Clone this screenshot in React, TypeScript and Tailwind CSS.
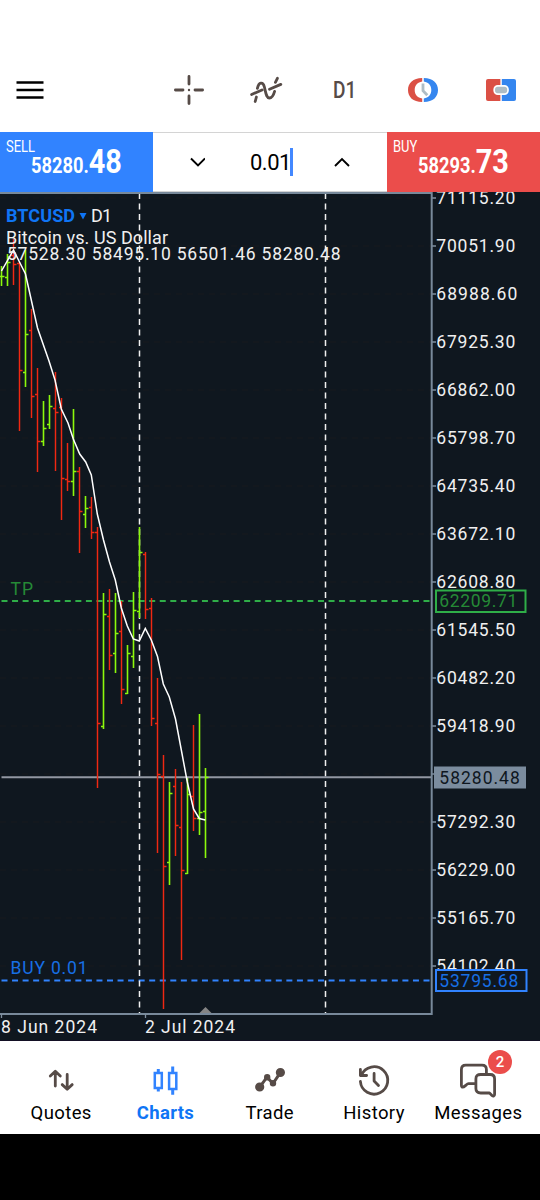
import React from "react";

type Bar = [high: number, low: number, open: number, close: number, up: 0 | 1];

// Daily bars, one every 6px from the left edge of the chart
const bars: Bar[] = [
  [266, 286, 276, 276, 1],
  [254, 286, 277, 262, 1],
  [239, 285, 255, 264, 0],
  [262, 431, 263, 370, 0],
  [250, 387, 372, 334, 1],
  [309, 418, 330, 396, 0],
  [368, 472, 394, 441, 0],
  [401, 446, 441, 428, 1],
  [395, 429, 424, 406, 1],
  [372, 471, 408, 412, 0],
  [398, 520, 407, 478, 0],
  [443, 491, 479, 481, 0],
  [409, 496, 481, 471, 1],
  [467, 553, 471, 511, 0],
  [496, 528, 514, 508, 1],
  [497, 539, 507, 532, 0],
  [527, 788, 532, 723, 0],
  [593, 729, 726, 614, 1],
  [589, 670, 616, 655, 0],
  [593, 673, 653, 633, 1],
  [601, 704, 631, 689, 0],
  [645, 694, 693, 653, 1],
  [592, 668, 656, 610, 1],
  [527, 618, 611, 552, 1],
  [552, 619, 554, 609, 0],
  [598, 726, 608, 718, 0],
  [678, 853, 723, 774, 0],
  [755, 1009, 776, 866, 0],
  [782, 885, 862, 793, 1],
  [769, 856, 786, 825, 0],
  [782, 960, 827, 870, 0],
  [778, 874, 873, 794, 1],
  [725, 831, 796, 818, 0],
  [714, 835, 818, 812, 1],
  [768, 858, 811, 777, 1],
];

const average =
  "1.5,271 13.5,250 19.5,262 25.5,274 31.5,301 37.5,328 49,361 55,380 61.3,409 68,423 73.3,439 79.7,454 85.7,462 91.3,475 97.3,514 103.5,540 109.5,562 115.3,580 121.3,608 127.3,626 133.3,639 139.3,641 145.3,628.5 151.3,640 157.5,656.5 163.3,684 169.3,697 175.5,719 181.5,751 187.3,782 193.5,809 199.3,818.5 205.3,820";

const prices = [
  "71115.20", "70051.90", "68988.60", "67925.30", "66862.00", "65798.70", "64735.40", "63672.10", "62608.80",
  "61545.50", "60482.20", "59418.90", "", "57292.30", "56229.00", "55165.70", "54102.40",
];

function Toolbar() {
  return (
    <header className="flex h-[132px] items-end bg-white text-[#564b47]">
      <div className="flex h-[84px] w-full items-center">
        <svg className="ml-4 h-7 w-7 text-black" viewBox="0 0 28 28" stroke="currentColor" strokeWidth="2.7">
          <path d="M.5 6.5h27M.5 14h27M.5 21.5h27" />
        </svg>
        <svg className="ml-[129px] h-8 w-8" viewBox="0 0 32 32" stroke="currentColor" strokeWidth="2.8" strokeLinecap="round">
          <path d="M16 2.4v7.6M16 22v7.6M2.4 16H10M22 16h7.6" />
          <circle cx="16" cy="16" r="1.2" fill="currentColor" stroke="none" />
        </svg>
        <svg className="ml-[44px] h-8 w-[34px]" viewBox="0 0 34 32" fill="none" stroke="currentColor" strokeWidth="2.8" strokeLinecap="round">
          <path d="M2.6 20.5L13 16M6.2 27.5L7.4 23M8.4 14.4C9.8 8 14 7.4 15.4 13C17 19.5 17.3 24 20.4 24C23.2 24 24.6 21 25.6 17.4M20.5 15.2L31.8 10.4M26.4 8.3L28.4 4.3" />
        </svg>
        <span className="ml-[50px] w-[24px] text-[23px] leading-none font-medium">
          <span className="block origin-left scale-x-[0.83]">D1</span>
        </span>
        <svg className="ml-[50px] h-8 w-8" viewBox="0 0 32 32" fill="none">
          <path d="M15.2 4C6 4 1 9 1 16s5 12 14.2 12v-3.5C10.5 23.8 7.7 20.5 7.7 16s2.8-7.8 7.5-8.5z" fill="#db5045" />
          <path d="M16.8 4C26 4 31 9 31 16s-5 12-14.2 12v-3.5c4.7-.7 7.5-4 7.5-8.5s-2.8-7.8-7.5-8.5z" fill="#3586ef" />
          <path d="M16 9.5v7.2l4.3 4.5" stroke="#afbdc5" strokeWidth="2.8" />
        </svg>
        <svg className="ml-[46px] h-8 w-8" viewBox="0 0 32 32">
          <path d="M3 5h12.4v22H3a2 2 0 0 1-2-2V7a2 2 0 0 1 2-2z" fill="#db5045" />
          <path d="M16.8 5H29a2 2 0 0 1 2 2v18a2 2 0 0 1-2 2H16.8z" fill="#3586ef" />
          <rect x="9.2" y="11.9" width="13.8" height="8.2" rx="3.6" fill="#afbdc5" stroke="#fff" strokeWidth="1.7" />
        </svg>
      </div>
    </header>
  );
}

function Quote({ side, whole, cents }: { side: string; whole: string; cents: string }) {
  return (
    <div className={`h-[60px] w-[153px] pt-[6px] pl-[6px] text-white ${side === "SELL" ? "bg-[#3183ff]" : "bg-[#eb4d4b]"}`}>
      <div className="h-[7px] origin-left scale-x-[0.81] text-[16px] leading-[17px]">{side}</div>
      <div className="ml-[24.5px] flex origin-left scale-x-[0.85] items-baseline font-bold whitespace-nowrap">
        <span className="text-[21.5px] leading-8">{whole}.</span>
        <span className="text-[34px] leading-8">{cents}</span>
      </div>
    </div>
  );
}

function OrderPanel() {
  return (
    <section className="flex h-[60px] bg-white">
      <Quote side="SELL" whole="58280" cents="48" />
      <div className="flex flex-1 items-center border-t border-b border-[#d4d4d4] text-black">
        <svg className="ml-9 h-4 w-4" viewBox="0 0 16 16" fill="none" stroke="currentColor" strokeWidth="1.9">
          <path d="M2 4.5L9 11.5L16 4.5" />
        </svg>
        <span className="mt-[2px] ml-[45px] w-[40px] text-[22px] leading-none tracking-[-0.5px]">0.01</span>
        <span className="h-7 w-[3px] bg-[#4388ff]" />
        <svg className="ml-[41px] h-4 w-4" viewBox="0 0 16 16" fill="none" stroke="currentColor" strokeWidth="1.9">
          <path d="M1 12L8 5L15 12" />
        </svg>
      </div>
      <Quote side="BUY" whole="58293" cents="73" />
    </section>
  );
}

function Chart() {
  return (
    <svg className="block h-[849px] w-[540px] bg-[#0f171f]" viewBox="0 192 540 849" fontSize="17.5" fill="#f0f0f0">
      {prices.map((p, i) => (
        <g key={i}>
          <path d={`M0 ${198 + i * 48}H431`} stroke="#191b1e" strokeDasharray="6 5" />
          <path d={`M432 ${198 + i * 48}h4`} stroke="#8090a0" strokeWidth="1.5" />
          {p && <text x="436.3" y={204 + i * 48} textLength={i === 2 ? 81 : 79}>{p}</text>}
        </g>
      ))}

      {/* order levels and current price */}
      <path d="M1.5 601H430" stroke="#2fae48" strokeWidth="2" strokeDasharray="6 4.55" />
      <path d="M1.5 980.5H430" stroke="#3183ff" strokeWidth="2" strokeDasharray="6 4.55" />
      <path d="M139.5 193V1013M325.5 193V1013" stroke="#f0f0f0" strokeWidth="1.5" strokeDasharray="6 4.5" />
      <path d="M1.5 777.3H431" stroke="#9297a2" strokeWidth="2" />

      {bars.map(([high, low, open, close, up], i) => (
        <path
          key={i}
          d={`M${1.5 + i * 6} ${high}V${low}M${-1 + i * 6} ${open + 0.5}h2.5M${1.5 + i * 6} ${close + 0.5}h3`}
          stroke={up ? "#8cf80c" : "#f02812"}
          strokeWidth={up ? 1.6 : 1.45}
        />
      ))}
      <polyline points={average} fill="none" stroke="#fff" strokeWidth="1.5" />

      <path d="M198.5 1014L205.5 1007L212.5 1014z" fill="#858585" />
      <path d="M0 193H431.7V1014H0" fill="none" stroke="#78899a" strokeWidth="2" />
      <path d="M1.5 1014v4M145.5 1014v4" stroke="#8090a0" strokeWidth="1.3" />

      <text x="6" y="222" fontSize="18" fill="#0f75f5" fontWeight="700" textLength="69">BTCUSD</text>
      <path d="M79.5 213h7L83 219.5z" fill="#0f75f5" />
      <text x="91" y="222" fontSize="18" textLength="21">D1</text>
      <text x="6" y="243.5" fontSize="18" textLength="162">Bitcoin vs. US Dollar</text>
      <text x="7" y="259.5" textLength="333.5">57528.30 58495.10 56501.46 58280.48</text>
      <text x="10.5" y="595" fill="#258a36" textLength="22.5">TP</text>
      <text x="10.5" y="974" fill="#176fe5" textLength="77">BUY 0.01</text>
      <text x="1" y="1033" textLength="96">8 Jun 2024</text>
      <text x="145" y="1033" textLength="90">2 Jul 2024</text>

      <rect x="436" y="590.5" width="89.5" height="21.5" fill="#0f171f" stroke="#2fae48" strokeWidth="2" />
      <text x="439.3" y="607" fill="#258a36" textLength="78">62209.71</text>
      <path d="M434 766.5h92V788.5H434z" fill="#7b8c9e" />
      <text x="439.3" y="783.5" fill="#0f171f" textLength="80.5">58280.48</text>
      <rect x="436" y="970" width="90.5" height="21" fill="#0f171f" stroke="#3183ff" strokeWidth="2" />
      <text x="439.3" y="986.5" fill="#176fe5" textLength="79">53795.68</text>
      <path d="M0 1040.5H540" stroke="#130f24" />
    </svg>
  );
}

function NavItem({ label, active, children }: { label: string; active?: boolean; children: React.ReactNode }) {
  return (
    <a className="flex w-[104.3px] flex-col items-center pt-[21px]">
      <svg
        className={`h-9 w-11 ${active ? "text-[#3183ff]" : "text-[#564b47]"}`}
        viewBox="0 0 44 36"
        fill="none"
        stroke="currentColor"
        strokeWidth="2.8"
        strokeLinecap="round"
        strokeLinejoin="round"
      >
        {children}
      </svg>
      <span className={`mt-1 text-[18.5px] leading-[22px] ${active ? "font-bold tracking-[0.3px] text-[#0f75f5]" : "tracking-[0.4px] text-black"}`}>
        {label}
      </span>
    </a>
  );
}

function BottomNav() {
  return (
    <nav className="flex h-[93px] bg-white pl-[9px]">
      <NavItem label="Quotes">
        <path d="M16.3 24V9.8M11.3 14L16.3 9.2L21.3 14M28.2 12.5V26.5M23.2 22.6L28.2 27.2L33.2 22.6" />
      </NavItem>
      <NavItem label="Charts" active>
        <path d="M15.3 7v3.5M15.3 26.5v3M29.7 4.5v6M29.7 27v5.7" strokeLinecap="butt" strokeWidth="3" />
        <path d="M11.8 11h7v15h-7zM26.1 11h7.2v16h-7.2z" strokeLinejoin="miter" strokeWidth="2.5" />
      </NavItem>
      <NavItem label="Trade">
        <path d="M11.5 25.3L19 15.2L25 21.5L32.5 10.3" strokeWidth="3" />
        <circle cx="11.7" cy="25" r="3.2" fill="currentColor" />
        <circle cx="19.2" cy="15.2" r="1.8" fill="currentColor" />
        <circle cx="25" cy="21.2" r="1.8" fill="currentColor" />
        <circle cx="32.4" cy="10.5" r="3.2" fill="currentColor" />
      </NavItem>
      <NavItem label="History">
        <path d="M9.4 13.2A13.7 13.7 0 1 1 8.4 19.5M8.4 7.5V13.5H14.6M22.1 11.5V19L26.5 23.5" />
      </NavItem>
      <NavItem label="Messages">
        <path d="M18.5 21.7H12.5C10.7 21.7 8.4 25.5 6.4 25.2C5.2 25 5.4 23.5 5.4 22V7.5C5.4 4.4 6.7 3.2 9.8 3.2H26C29.1 3.2 30.4 4.4 30.4 7.5V12" />
        <path d="M24.7 12.5H34.2C37.4 12.5 38.6 13.8 38.6 17V32.2C38.6 34.6 37 34.4 36 33.4L33.5 31H24.7C21.4 31 19.9 29.8 19.9 26.6V17C19.9 13.8 21.4 12.5 24.7 12.5z" />
      </NavItem>
    </nav>
  );
}

export default function App() {
  return (
    <div className="relative h-[1200px] w-[540px] overflow-hidden bg-black font-[Roboto,sans-serif]">
      <Toolbar />
      <OrderPanel />
      <Chart />
      <BottomNav />
      <span className="absolute top-[1050px] left-[488px] flex h-6 w-6 items-center justify-center rounded-full bg-[#eb4d4b] text-[15px] font-medium text-white">
        2
      </span>
    </div>
  );
}
